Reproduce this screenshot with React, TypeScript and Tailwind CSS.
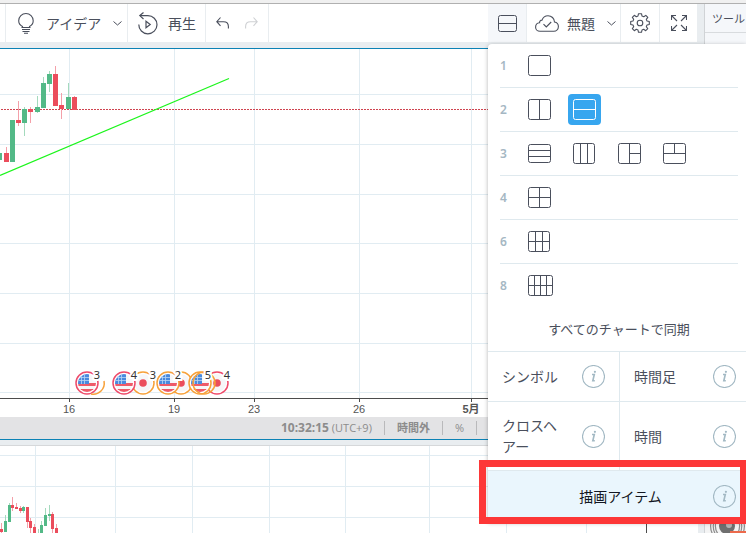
import { useState } from "react";
import type { ReactNode } from "react";

type Candle = { x: number; w: number; open: number; close: number; high: number; low: number; up?: boolean };

const MAIN_CANDLES: Candle[] = [
  { x: -3, w: 5, open: 104, close: 111, high: 104, low: 111, up: true },
  { x: 4, w: 5, open: 104, close: 113, high: 98, low: 113 },
  { x: 10, w: 5, open: 71, close: 113, high: 71, low: 113, up: true },
  { x: 16, w: 5, open: 71, close: 74, high: 52, low: 77 },
  { x: 22, w: 5, open: 60, close: 74, high: 58, low: 87, up: true },
  { x: 28, w: 5, open: 60, close: 63, high: 58, low: 74 },
  { x: 35, w: 5, open: 58, close: 63, high: 47, low: 64, up: true },
  { x: 41, w: 5, open: 34, close: 59, high: 28, low: 59, up: true },
  { x: 47, w: 5, open: 25, close: 35, high: 22, low: 43, up: true },
  { x: 53, w: 5, open: 25, close: 57, high: 17, low: 57 },
  { x: 59, w: 5, open: 56, close: 60, high: 44, low: 70 },
  { x: 66, w: 5, open: 48, close: 60, high: 34, low: 60, up: true },
  { x: 72, w: 5, open: 48, close: 61, high: 47, low: 61 },
];

const LOWER_CANDLES: Candle[] = [
  { x: 0, w: 3, open: 83, close: 86, high: 77, low: 87 },
  { x: 4, w: 3, open: 75, close: 86, high: 69, low: 86, up: true },
  { x: 8, w: 3, open: 59, close: 76, high: 57, low: 76, up: true },
  { x: 11, w: 3, open: 59, close: 62, high: 51, low: 65 },
  { x: 15, w: 3, open: 61, close: 63, high: 57, low: 63 },
  { x: 19, w: 3, open: 62, close: 65, high: 60, low: 67 },
  { x: 22, w: 3, open: 61, close: 65, high: 60, low: 67, up: true },
  { x: 26, w: 3, open: 61, close: 76, high: 61, low: 82 },
  { x: 29, w: 3, open: 75, close: 82, high: 72, low: 87 },
  { x: 33, w: 3, open: 81, close: 90, high: 78, low: 90 },
  { x: 37, w: 3, open: 87, close: 90, high: 83, low: 90, up: true },
  { x: 40, w: 3, open: 79, close: 90, high: 75, low: 90, up: true },
  { x: 44, w: 3, open: 69, close: 80, high: 62, low: 80, up: true },
  { x: 48, w: 3, open: 68, close: 70, high: 59, low: 75, up: true },
  { x: 51, w: 3, open: 68, close: 83, high: 66, low: 87 },
  { x: 55, w: 3, open: 82, close: 90, high: 78, low: 90 },
];

const TIME_LABELS = [
  { x: 69, text: "16" },
  { x: 174, text: "19" },
  { x: 254, text: "23" },
  { x: 359, text: "26" },
  { x: 471, text: "5月", bold: true },
];

type LayoutShape = { id: string; w: number; h: number; d: string };

const LAYOUTS: { count: number; shapes: LayoutShape[] }[] = [
  { count: 1, shapes: [{ id: "1", w: 23, h: 21, d: "" }] },
  {
    count: 2,
    shapes: [
      { id: "2v", w: 23, h: 21, d: "M11.5 0V21" },
      { id: "2h", w: 23, h: 21, d: "M0 10.5H23" },
    ],
  },
  {
    count: 3,
    shapes: [
      { id: "3h", w: 23, h: 19, d: "M0 6.5H23M0 12.5H23" },
      { id: "3v", w: 22, h: 21, d: "M7.5 0V21M14.5 0V21" },
      { id: "3r", w: 23, h: 21, d: "M11.5 0V21M11.5 10.5H23" },
      { id: "3t", w: 23, h: 21, d: "M0 10.5H23M11.5 0V10.5" },
    ],
  },
  { count: 4, shapes: [{ id: "4", w: 23, h: 21, d: "M11.5 0V21M0 10.5H23" }] },
  { count: 6, shapes: [{ id: "6", w: 22, h: 21, d: "M7.5 0V21M14.5 0V21M0 10.5H22" }] },
  { count: 8, shapes: [{ id: "8", w: 25, h: 21, d: "M6.5 0V21M12.5 0V21M18.5 0V21M0 10.5H25" }] },
];

function LayoutIcon({ w, h, d }: { w: number; h: number; d: string }) {
  return (
    <svg width={w} height={h} fill="none" stroke="currentColor" className="shrink-0">
      <rect x="0.5" y="0.5" width={w - 1} height={h - 1} rx="2" />
      <path d={d} />
    </svg>
  );
}

function Chevron() {
  return (
    <svg width="9" height="5" viewBox="0 0 9 5" fill="none" stroke="currentColor" className="shrink-0">
      <path d="M0.5 0.5L4.5 4L8.5 0.5" />
    </svg>
  );
}

function BulbIcon() {
  return (
    <svg width="16" height="21" viewBox="0 0 16 21" fill="none" stroke="currentColor" strokeWidth="1.1" className="shrink-0">
      <path d="M4.5 14.5V13.6C2.2 12.4 0.7 10.3 0.7 7.8A7.2 7.2 0 0 1 15.2 7.8C15.2 10.3 13.8 12.4 11.5 13.6V14.5" />
      <path d="M3.5 14.5H12.5M4 16.5H12M4.5 18.5H11.5M6 20.3H10" />
    </svg>
  );
}

function ReplayIcon() {
  return (
    <svg width="20" height="23" viewBox="0 0 20 23" fill="none" stroke="currentColor" strokeWidth="1.2" className="shrink-0">
      <path d="M0.8 12.5A9.1 9.1 0 1 0 9.8 3.6H2" />
      <path d="M5.5 0.5L1.8 3.6L5.5 7" />
      <path d="M8 9.3V15.7L12.2 12.5Z" />
    </svg>
  );
}

function UndoIcon({ flip = false }: { flip?: boolean }) {
  return (
    <svg width="13" height="12" viewBox="0 0 13 12" fill="none" stroke="currentColor" strokeWidth="1.1">
      {flip ? (
        <path d="M8.5 0.5L12.2 4.7L8.5 8.8M12 4.7H5.5C2.5 4.7 0.6 6.5 0.6 9.5V11.5" />
      ) : (
        <path d="M4.5 0.5L0.8 4.7L4.5 8.8M1 4.7H7.5C10.5 4.7 12.4 6.5 12.4 9.5V11.5" />
      )}
    </svg>
  );
}

function CloudIcon() {
  return (
    <svg width="24" height="17" viewBox="0 0 24 17" fill="none" stroke="currentColor" strokeWidth="1.1" className="shrink-0">
      <path d="M5 16.3C2.5 16.3 0.6 14.5 0.6 12.2C0.6 9.8 2.3 8 4.6 7.8C4.4 6.2 5.6 5 7 5.1C7.9 2.5 10.2 0.7 13 0.7C16.6 0.7 19.3 3.4 19.5 7C21.8 7.4 23.4 9.3 23.4 11.6C23.4 14.2 21.4 16.3 18.8 16.3Z" />
      <path d="M8.5 9.2L11.3 12L16.2 7" />
    </svg>
  );
}

function GearIcon() {
  return (
    <svg width="20" height="20" viewBox="0 0 20 20" fill="none" stroke="currentColor" strokeWidth="1.1" strokeLinejoin="round">
      <path d="M8.5 0.7H11.5L12 3.1L13.8 3.8L15.8 2.4L17.8 4.4L16.3 6.4L17 8L19.3 8.5V11.5L17 12L16.3 13.6L17.8 15.7L15.7 17.7L13.7 16.3L12 17L11.5 19.3H8.5L8 17L6.3 16.3L4.3 17.7L2.3 15.7L3.7 13.6L3 12L0.7 11.5V8.5L3 8L3.7 6.4L2.3 4.3L4.3 2.3L6.3 3.7L8 3Z" />
      <circle cx="10" cy="10" r="2.8" />
    </svg>
  );
}

function FullscreenIcon() {
  return (
    <svg width="16" height="16" viewBox="0 0 16 16" fill="none" stroke="currentColor" strokeWidth="1.1">
      <path d="M0.5 5V0.5H5M11 0.5H15.5V5M15.5 11V15.5H11M5 15.5H0.5V11" />
      <path d="M0.5 0.5L6 6M15.5 0.5L10 6M15.5 15.5L10 10M0.5 15.5L6 10" />
    </svg>
  );
}

function InfoIcon() {
  return (
    <svg width="23" height="23" viewBox="0 0 23 23" fill="none" stroke="#a3b9c4" className="shrink-0">
      <circle cx="11.5" cy="11.5" r="11" strokeWidth="1.1" />
      <path d="M10 9.5H12.3L10.8 15.8H12.8" strokeWidth="1.6" />
      <circle cx="12.9" cy="6.8" r="1.1" fill="#a3b9c4" stroke="none" />
    </svg>
  );
}

function Candles({ data }: { data: Candle[] }) {
  return (
    <g shapeRendering="crispEdges">
      {data.map((c) => (
        <g key={c.x}>
          <rect x={c.x + Math.floor(c.w / 2)} y={c.high} width="1" height={c.low - c.high} fill={c.up ? "#a4dabd" : "#f4a0a9"} />
          <rect x={c.x} y={c.open} width={c.w} height={c.close - c.open} fill={c.up ? "#53b987" : "#eb4d5c"} />
        </g>
      ))}
    </g>
  );
}

function Grid({ xs, ys, bottom }: { xs: number[]; ys: number[]; bottom: string | number }) {
  return (
    <g stroke="#e1ecf2" shapeRendering="crispEdges">
      {xs.map((x) => (
        <line key={x} x1={x + 0.5} x2={x + 0.5} y1="0" y2={bottom} />
      ))}
      {ys.map((y) => (
        <line key={y} x1="0" x2="100%" y1={y + 0.5} y2={y + 0.5} />
      ))}
    </g>
  );
}

function EventFlag({ x, ring, country, count }: { x: number; ring: string; country?: "us" | "jp"; count?: number }) {
  return (
    <g transform={`translate(${x} 334)`}>
      <circle r="11" fill="#fff" fillOpacity={country ? 1 : 0} stroke={ring} strokeWidth="1.5" />
      {country === "us" && (
        <g clipPath="url(#flag)">
          <rect x="-9" y="-9" width="18" height="18" fill="#f6f6f8" />
          <path d="M-9 1.5H9M-9 7.5H9" stroke="#ee5a68" strokeWidth="3" />
          <rect x="-9" y="-9" width="11" height="10" fill="#4a8ade" />
          <path d="M-9 -5.5H2M-9 -2.5H2M-5.5 -9V1M-2.5 -9V1" stroke="#b9d5f5" strokeWidth="0.8" />
        </g>
      )}
      {country === "jp" && (
        <>
          <circle r="9" fill="#f6f6f8" />
          <circle r="3.8" fill="#eb4d5c" />
        </>
      )}
      {count && (
        <text
          x="10"
          y="-4"
          textAnchor="middle"
          stroke="#fff"
          strokeWidth="4"
          paintOrder="stroke"
          className="fill-[#333] font-['Noto_Sans',sans-serif] text-[11px]"
        >
          {count}
        </text>
      )}
    </g>
  );
}

function MainChart() {
  return (
    <svg className="block h-[368px] w-full bg-white">
      <defs>
        <clipPath id="flag">
          <circle r="9" />
        </clipPath>
      </defs>
      <Grid xs={[69, 174, 254, 359, 471]} ys={[45, 95, 145, 194, 244, 294, 343]} bottom={349} />
      <line x1="1" x2="100%" y1="60.5" y2="60.5" stroke="#cf4450" strokeDasharray="2 1" shapeRendering="crispEdges" />
      <Candles data={MAIN_CANDLES} />
      <line x1="0" y1="126.5" x2="229" y2="29.5" stroke="#1cf51c" strokeWidth="1.3" />

      <EventFlag x={87} ring="#ee4b6a" country="us" count={3} />
      <path d="M91 345A11 11 0 0 0 104 332" fill="none" stroke="#f7a13a" strokeWidth="1.5" />
      <EventFlag x={143} ring="#f7a13a" country="jp" count={3} />
      <EventFlag x={124} ring="#ee4b6a" country="us" count={4} />
      <EventFlag x={181} ring="#f7a13a" country="jp" />
      <EventFlag x={168} ring="#f7a13a" country="us" count={2} />
      <EventFlag x={217} ring="#ee4b6a" country="jp" count={4} />
      <EventFlag x={200} ring="#f7a13a" country="us" />
      <EventFlag x={204} ring="#f7a13a" />
      <EventFlag x={198} ring="transparent" count={5} />

      <g stroke="#4c4c4c" shapeRendering="crispEdges">
        <line x1="0" x2="100%" y1="349.5" y2="349.5" />
        {TIME_LABELS.map((l) => (
          <line key={l.x} x1={l.x + 0.5} x2={l.x + 0.5} y1="350" y2="353" />
        ))}
      </g>
      {TIME_LABELS.map((l) => (
        <text
          key={l.x}
          x={l.x}
          y="364"
          textAnchor="middle"
          className={`fill-[#555] font-['Liberation_Sans','Noto_Sans_CJK_JP',sans-serif] text-[11px] ${l.bold ? "font-bold" : ""}`}
        >
          {l.text}
        </text>
      ))}
    </svg>
  );
}

function LowerChart() {
  return (
    <div className="flex min-h-[87px] flex-1 bg-white">
      <svg className="block h-[87px] min-w-0 flex-1">
        <Grid xs={[35, 115, 192, 269, 345, 429, 506, 586]} ys={[9, 40, 71]} bottom="100%" />
        <Candles data={LOWER_CANDLES} />
      </svg>
      <div className="w-[52px] border-l border-[#4c4c4c]" />
    </div>
  );
}

function ToolButton({ label, className = "", children }: { label: string; className?: string; children: ReactNode }) {
  return (
    <button type="button" aria-label={label} className={`flex shrink-0 items-center border-r border-[#e9edf0] ${className}`}>
      {children}
    </button>
  );
}

function Toolbar() {
  return (
    <div className="flex h-[38px] bg-white text-sm">
      <div className="w-1.5 shrink-0 border-r border-[#e9edf0]" />
      <ToolButton label="アイデア" className="w-[122px] pl-3">
        <BulbIcon />
        <span className="mx-3">アイデア</span>
        <Chevron />
      </ToolButton>
      <ToolButton label="再生" className="w-[78px] gap-2.5 pl-2.5">
        <ReplayIcon />
        再生
      </ToolButton>
      <div className="flex w-[63px] shrink-0 items-center gap-4 border-r border-[#e9edf0] pl-2.5">
        <button type="button" aria-label="元に戻す">
          <UndoIcon />
        </button>
        <button type="button" aria-label="やり直し" disabled className="text-[#cfd1d4]">
          <UndoIcon flip />
        </button>
      </div>
      <div className="flex-1" />
      <ToolButton label="レイアウト" className="w-[39px] justify-center bg-[#f5f7fa]">
        <LayoutIcon w={19} h={17} d="M0 8.5H19" />
      </ToolButton>
      <ToolButton label="無題" className="w-[94px] pl-2">
        <CloudIcon />
        <span className="ml-2 mr-3">無題</span>
        <Chevron />
      </ToolButton>
      <ToolButton label="設定" className="w-[39px] justify-center">
        <GearIcon />
      </ToolButton>
      <ToolButton label="全画面" className="w-[38px] justify-center">
        <FullscreenIcon />
      </ToolButton>
    </div>
  );
}

function StatusBar() {
  return (
    <div className="flex h-[22px] items-center justify-end bg-[#e3e3e5] pr-[221px] font-['Open_Sans','Noto_Sans_CJK_JP',sans-serif] text-[11px] text-[#8c8c8c]">
      <button type="button" className="mr-3">
        <b className="text-xs">10:32:15</b> (UTC+9)
      </button>
      <button type="button" className="border-l border-[#b9b9bb] px-3 leading-[14px] font-bold">
        時間外
      </button>
      <button type="button" className="border-x border-[#b9b9bb] px-3 leading-[14px]">
        %
      </button>
    </div>
  );
}

function SyncCell({ label, className = "" }: { label: string; className?: string }) {
  return (
    <button type="button" className={`flex items-center gap-4 border-t border-[#dfe9ee] leading-[21px] ${className}`}>
      <span className="flex-1">{label}</span>
      <InfoIcon />
    </button>
  );
}

function LayoutMenu() {
  const [selected, setSelected] = useState("2h");

  return (
    <div className="absolute right-0 top-11 w-[258px] rounded-tl bg-white text-sm shadow-[0_1px_4px_rgba(0,0,0,0.3)]">
      <div className="pl-3 pr-2">
        {LAYOUTS.map((row) => (
          <div key={row.count} className="flex h-11 items-center border-b border-[#dfe9ee] last:border-transparent">
            <span className="w-[23px] font-['Noto_Sans',sans-serif] text-xs font-semibold text-[#a5b7c3]">{row.count}</span>
            <div className="flex gap-3">
              {row.shapes.map((s) => (
                <button
                  key={s.id}
                  type="button"
                  aria-label={`レイアウト ${s.id}`}
                  aria-pressed={selected === s.id}
                  onClick={() => setSelected(s.id)}
                  className={`flex h-[31px] w-[33px] items-center rounded pl-[5px] ${selected === s.id ? "bg-[#37a6ef] text-white" : ""}`}
                >
                  <LayoutIcon w={s.w} h={s.h} d={s.d} />
                </button>
              ))}
            </div>
          </div>
        ))}
      </div>

      <h2 className="flex h-[43px] items-center justify-center pl-1 text-[13px]">すべてのチャートで同期</h2>
      <div className="grid grid-cols-[132px_1fr]">
        <SyncCell label="シンボル" className="h-[50px] border-r px-3.5 text-left" />
        <SyncCell label="時間足" className="pl-3.5 pr-2.5 text-left" />
        <SyncCell label="クロスヘアー" className="h-[69px] border-r px-3.5 text-left" />
        <SyncCell label="時間" className="pl-3.5 pr-2.5 text-left" />
        <SyncCell label="描画アイテム" className="col-span-2 h-[52px] bg-[#eaf6fd] pl-14 pr-2.5 text-center text-[#131722]" />
      </div>
    </div>
  );
}

function Sidebar() {
  return (
    <aside className="flex w-[42px] shrink-0 flex-col overflow-hidden border-l border-[#d0d3d6] bg-[#f5f7fa]">
      <div className="flex h-[29px] items-center border-b border-[#d8dbde] pl-[7px] text-[11px] whitespace-nowrap">ツール</div>
      <div className="flex-1" />
      <svg width="41" height="22" className="block bg-[#f4f4f4]">
        <g fill="none" stroke="#8d8d8d" strokeWidth="1.2">
          <path d="M14 6A13 13 0 0 0 14 24M11 6A16 16 0 0 0 11 24M8 6A19 19 0 0 0 8 24" />
          <path d="M31 6A13 13 0 0 1 31 24M34 6A16 16 0 0 1 34 24M37 6A19 19 0 0 1 37 24" />
        </g>
        <circle cx="22" cy="15" r="8" fill="#6f6f6f" />
        <circle cx="24" cy="14" r="3" fill="#b5b5b5" />
        <rect x="25" y="20" width="16" height="2" fill="#ec6a4c" />
      </svg>
    </aside>
  );
}

export default function App() {
  return (
    <div className="relative flex min-h-screen flex-col overflow-hidden bg-[#e9edf0] font-['Noto_Sans_CJK_JP',sans-serif] text-[#4a4f5c]">
      <div className="h-1 border-b border-[#b0b0b0] bg-[#f0f0f0]" />
      <div className="flex flex-1 gap-1.5">
        <main className="flex min-w-0 flex-1 flex-col">
          <Toolbar />
          <section className="mt-1.5 border-y border-[#0c82b5]">
            <MainChart />
            <StatusBar />
          </section>
          <section className="mt-[5px] flex flex-1 flex-col border-t border-[#d6d8da]">
            <LowerChart />
          </section>
        </main>
        <Sidebar />
      </div>

      <LayoutMenu />
      {/* red marker frame over the drawing sync option */}
      <div className="pointer-events-none absolute right-0 top-[460px] h-16 w-[267px] border-[7px] border-r-[6px] border-[#fd3737]" />
    </div>
  );
}
